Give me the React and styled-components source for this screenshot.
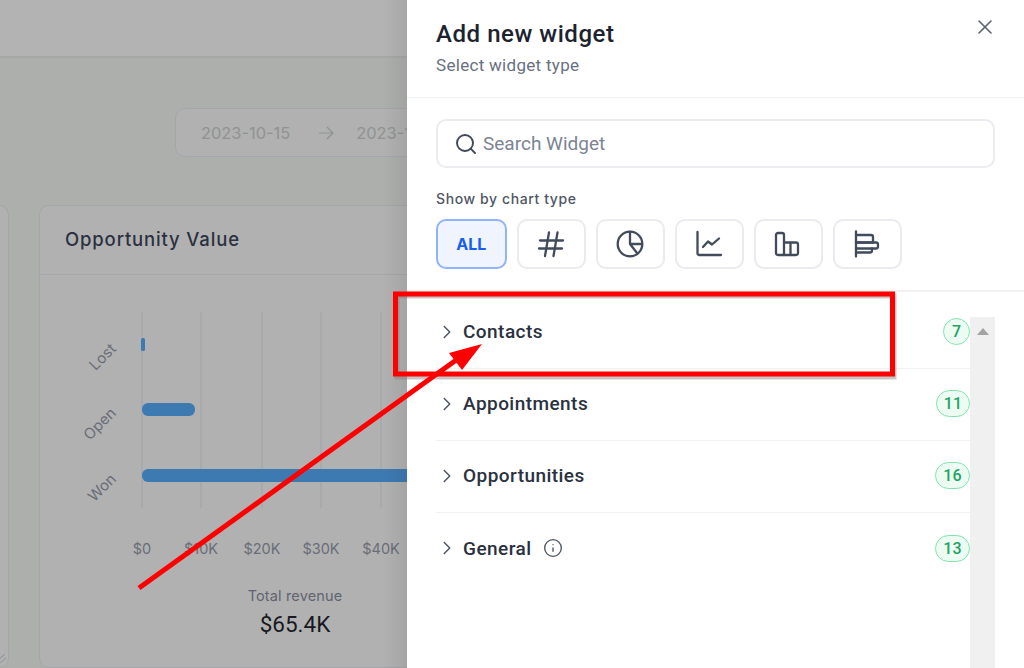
import React from "react";
import styled, { createGlobalStyle } from "styled-components";
import { X, Search, ChevronRight, Info } from "lucide-react";

const Global = createGlobalStyle`
  html, body { margin: 0; padding: 0; background: #fff; }
  * { box-sizing: border-box; }
  body { font-family: Inter, "Liberation Sans", sans-serif; }
`;

const Page = styled.div`
  position: relative;
  width: 1024px;
  height: 668px;
  overflow: hidden;
  display: flex;
`;

/* ---------- dimmed dashboard ---------- */
const Dashboard = styled.div`
  position: relative;
  width: 407px;
  flex: none;
  height: 100%;
  display: flex;
  flex-direction: column;
  background: #adafad;
  overflow: hidden;
  &::after {
    content: "";
    position: absolute;
    top: 0;
    right: 0;
    bottom: 0;
    width: 24px;
    background: linear-gradient(to right, rgba(0, 0, 0, 0), rgba(0, 0, 0, 0.07));
  }
`;
const TopBar = styled.div`
  height: 58px;
  flex: none;
  background: #b3b3b3;
  border-bottom: 2px solid #a6a7a7;
`;
const DateRow = styled.div`
  height: 147px;
  flex: none;
  padding: 50px 0 0 175px;
`;
const DateRange = styled.div`
  width: 300px;
  height: 49px;
  border: 1px solid #a4a6ac;
  border-radius: 10px;
  background: #b0b1b0;
  display: flex;
  align-items: center;
  padding-left: 25px;
  font-size: 16.4px;
  color: #909293;
  white-space: nowrap;
`;
const DateArrow = styled.svg`
  margin: 0 22px 0 28px;
  flex: none;
`;
const CardRow = styled.div`
  flex: 1;
  display: flex;
  gap: 30px;
  margin-left: -101px;
`;
const Card = styled.div`
  position: relative;
  border: 1px solid #a4a6a8;
  border-radius: 10px;
  background: #b1b1b1;
  height: 463px;
  flex: none;
  width: ${(p) => p.$w}px;
  display: flex;
  flex-direction: column;
`;
const ResizeHandle = styled.svg`
  position: absolute;
  right: 1px;
  bottom: 3px;
`;
const CardHead = styled.div`
  height: 69px;
  flex: none;
  border-bottom: 1px solid #a6a7a8;
  padding: 0 25px 3px;
  display: flex;
  align-items: center;
  font-size: 18.5px;
  font-weight: 500;
  letter-spacing: 0.85px;
  color: #2b3140;
  white-space: nowrap;
`;
const ChartWrap = styled.div`
  height: 304px;
  flex: none;
  overflow: hidden;
`;
const TotalBox = styled.div`
  width: 120px;
  margin-left: 195px;
  text-align: center;
  padding-top: 7px;
  white-space: nowrap;
`;
const TotalLabel = styled.div`
  font-size: 14.5px;
  line-height: 20px;
  letter-spacing: 0.15px;
  color: #5f6470;
`;
const TotalValue = styled.div`
  font-family: Roboto, sans-serif;
  font-size: 22.500px;
  line-height: 28px;
  margin-top: 4px;
  font-weight: 400;
  color: #171a22;
`;

/* ---------- drawer ---------- */
const Drawer = styled.div`
  flex: 1;
  background: #fff;
  display: flex;
  flex-direction: column;
  min-width: 0;
`;
const DrawerHead = styled.div`
  height: 98px;
  flex: none;
  border-bottom: 1px solid #eef0f2;
  padding: 18px 29px 0;
  display: flex;
  justify-content: space-between;
  align-items: flex-start;
`;
const Titles = styled.div`
  display: flex;
  flex-direction: column;
`;
const Title = styled.div`
  font-family: Roboto, sans-serif;
  font-size: 24px;
  line-height: 32px;
  font-weight: 500;
  letter-spacing: 0.55px;
  color: #1c2230;
`;
const Sub = styled.div`
  font-family: Roboto, sans-serif;
  font-size: 17px;
  line-height: 24px;
  margin-top: 3px;
  letter-spacing: 0.3px;
  color: #687082;
`;
const Close = styled.button`
  all: unset;
  display: flex;
  color: #5c6370;
  margin: -3px -2px 0 0;
`;
const Filters = styled.div`
  height: 194px;
  flex: none;
  border-bottom: 2px solid #f0f1f3;
  padding: 21px 29px 0;
`;
const SearchBox = styled.div`
  height: 49px;
  border: 2px solid #eaecef;
  border-radius: 10px;
  display: flex;
  align-items: center;
  gap: 5px;
  padding: 0 16px;
  font-family: Roboto, sans-serif;
  font-size: 19px;
  color: #7c8494;
`;
const FilterLabel = styled.div`
  margin-top: 22px;
  font-size: 14px;
  line-height: 18px;
  font-weight: 500;
  color: #4f5666;
  letter-spacing: 0.6px;
`;
const Chips = styled.div`
  display: flex;
  margin-top: 11px;
  gap: 10px;
`;
const Chip = styled.button`
  all: unset;
  box-sizing: border-box;
  width: ${(p) => p.$w}px;
  height: 50px;
  border-radius: 10px;
  border: 2px solid ${(p) => (p.$on ? "#8fb4fb" : "#e9ebf0")};
  background: ${(p) => (p.$on ? "#eff4ff" : "#fff")};
  color: ${(p) => (p.$on ? "#155eef" : "#414b5c")};
  display: flex;
  align-items: center;
  justify-content: center;
  font-size: 16px;
  font-weight: 700;
`;
const Body = styled.div`
  flex: 1;
  display: flex;
  padding: 5px 29px 0;
  min-height: 0;
`;
const List = styled.div`
  flex: 1;
  min-width: 0;
`;
const Row = styled.div`
  height: 72px;
  padding-bottom: 2px;
  display: flex;
  align-items: center;
  border-bottom: ${(p) => (p.$last ? "none" : "1px solid #f0f1f3")};
  color: #2a3140;
  font-family: Roboto, sans-serif;
  font-size: 19px;
  font-weight: 500;
  letter-spacing: 0.45px;
`;
const Chevron = styled(ChevronRight)`
  color: #475063;
  margin-right: 5px;
`;
const RowInfo = styled(Info)`
  color: #475063;
  margin-left: 11px;
`;
const Badge = styled.span`
  margin-left: auto;
  min-width: 27px;
  height: 27px;
  padding: 0 ${(p) => p.$pad || 0}px;
  border-radius: 14px;
  border: 1.5px solid #7fe3ac;
  background: #edfcf2;
  color: #21a464;
  font-family: Roboto, sans-serif;
  font-size: 16px;
  font-weight: 500;
  letter-spacing: 0;
  display: flex;
  align-items: center;
  justify-content: center;
`;
const Track = styled.div`
  width: 25px;
  flex: none;
  background: #f0f0f0;
  padding-top: 11px;
  display: flex;
  justify-content: center;
  align-items: flex-start;
  margin-top: 20px;
`;
const Arrowhead = styled.div`
  width: 0;
  height: 0;
  border-left: 6px solid transparent;
  border-right: 6px solid transparent;
  border-bottom: 7px solid #a3a3a3;
`;

/* ---------- annotation over everything ---------- */
const Annotation = styled.svg`
  position: absolute;
  left: 0;
  top: 0;
  pointer-events: none;
`;

const icon = {
  width: 28,
  height: 28,
  viewBox: "0 0 28 28",
  fill: "none",
  stroke: "currentColor",
  strokeWidth: 2.3,
  strokeLinecap: "round",
  strokeLinejoin: "round",
};

const HashIcon = () => (
  <svg {...icon}>
    <path d="M3 10.5h23M2 18.5h23M12 2.5 8 26M20.5 2.5 16.5 26" />
  </svg>
);
const PieIcon = () => (
  <svg {...icon}>
    <circle cx="14" cy="14" r="12.3" />
    <path d="M14 2v12h12M14 14l7 9" />
  </svg>
);
const LineIcon = () => (
  <svg {...icon}>
    <path d="M2.500 2v21.500a1.500 1.500 0 0 0 1.500 1.500h22" />
    <path d="M8 17l5-5.500 4 3 7-6" />
  </svg>
);
const BarsIcon = () => (
  <svg {...icon}>
    <path d="M2 5a2 2 0 0 1 2-2h4a2 2 0 0 1 2 2v20H4a2 2 0 0 1-2-2V5Z" />
    <path d="M10 12.500h12a2 2 0 0 1 2 2V23a2 2 0 0 1-2 2H10" />
    <path d="M16.500 13v12" />
  </svg>
);
const HBarsIcon = () => (
  <svg {...icon}>
    <path d="M3 1.500v25" />
    <path d="M3 5h15a2 2 0 0 1 2 2v5.500H3" />
    <path d="M3 12.500h20a2 2 0 0 1 2 2v2a2 2 0 0 1-2 2H3" />
    <path d="M19 18.500v2a2 2 0 0 1-2 2H3" />
  </svg>
);

const ticks = [
  [142, "$0"],
  [201, "$10K"],
  [262, "$20K"],
  [321, "$30K"],
  [381, "$40K"],
];

const Chart = () => (
  <svg width="407" height="304" viewBox="40 275 407 304" fontFamily="Inter, sans-serif" fontSize="14.5">
    {ticks.map(([x]) => (
      <line key={x} x1={x} x2={x} y1="312" y2="508" stroke="#9fa2a8" strokeWidth="1" />
    ))}
    <rect x="141" y="338" width="4" height="13" rx="1.500" fill="#3d7ab2" />
    <rect x="142" y="403" width="53" height="13" rx="6" fill="#3d7ab2" />
    <rect x="142" y="469" width="300" height="13" rx="6" fill="#3d7ab2" />
    {ticks.map(([x, t]) => (
      <text key={t} x={x} y="554" textAnchor="middle" fill="#696d78">{t}</text>
    ))}
    <text transform="translate(114 347) rotate(-45)" textAnchor="end" dominantBaseline="middle" fontSize="15" fill="#696d78">Lost</text>
    <text transform="translate(114 411) rotate(-45)" textAnchor="end" dominantBaseline="middle" fontSize="15" fill="#696d78">Open</text>
    <text transform="translate(114 477) rotate(-45)" textAnchor="end" dominantBaseline="middle" fontSize="15" fill="#696d78">Won</text>
  </svg>
);

export default function App() {
  return (
    <Page>
      <Global />
      <Dashboard>
        <TopBar />
        <DateRow>
          <DateRange>
            <span>2023-10-15</span>
            <DateArrow width="16" height="14" viewBox="0 0 16 14" fill="none" stroke="#8f9193" strokeWidth="1.2">
              <path d="M1 7h14M9 1l6 6-6 6" />
            </DateArrow>
            <span>2023-10-15</span>
          </DateRange>
        </DateRow>
        <CardRow>
          <Card $w={110}>
            <ResizeHandle width="8" height="10" viewBox="0 0 8 10" fill="none" stroke="#8f9196" strokeWidth="1">
              <path d="M0 5 6 0M0 10 7 4" />
            </ResizeHandle>
          </Card>
          <Card $w={500}>
            <CardHead>Opportunity Value</CardHead>
            <ChartWrap>
              <Chart />
            </ChartWrap>
            <TotalBox>
              <TotalLabel>Total revenue</TotalLabel>
              <TotalValue>$65.4K</TotalValue>
            </TotalBox>
          </Card>
        </CardRow>
      </Dashboard>
      <Drawer>
        <DrawerHead>
          <Titles>
            <Title>Add new widget</Title>
            <Sub>Select widget type</Sub>
          </Titles>
          <Close aria-label="Close"><X size={24} strokeWidth={1.6} /></Close>
        </DrawerHead>
        <Filters>
          <SearchBox>
            <Search size={24} color="#3f4859" strokeWidth={1.9} />
            Search Widget
          </SearchBox>
          <FilterLabel>Show by chart type</FilterLabel>
          <Chips>
            <Chip $on $w={70.5}>ALL</Chip>
            <Chip $w={69}><HashIcon /></Chip>
            <Chip $w={69}><PieIcon /></Chip>
            <Chip $w={69}><LineIcon /></Chip>
            <Chip $w={69}><BarsIcon /></Chip>
            <Chip $w={69}><HBarsIcon /></Chip>
          </Chips>
        </Filters>
        <Body>
          <List>
            <Row><Chevron size={22} strokeWidth={1.5} />Contacts<Badge>7</Badge></Row>
            <Row><Chevron size={22} strokeWidth={1.5} />Appointments<Badge $pad={7}>11</Badge></Row>
            <Row><Chevron size={22} strokeWidth={1.5} />Opportunities<Badge $pad={7.5}>16</Badge></Row>
            <Row $last><Chevron size={22} strokeWidth={1.5} />General<RowInfo size={20} strokeWidth={1.6} /><Badge $pad={7.5}>13</Badge></Row>
          </List>
          <Track><Arrowhead /></Track>
        </Body>
      </Drawer>
      <Annotation width="1024" height="668" viewBox="0 0 1024 668">
        <rect x="397" y="296" width="497" height="81" fill="none" stroke="#808080" strokeOpacity="0.45" strokeWidth="5" />
        <rect x="395.500" y="294" width="497" height="80" fill="none" stroke="#fe0000" strokeWidth="5" />
        <path d="M139 588 L459 358" stroke="#fe0000" strokeWidth="5" fill="none" />
        <path d="M482 344 L449 353 L462 370 Z" fill="#fe0000" />
      </Annotation>
    </Page>
  );
}
